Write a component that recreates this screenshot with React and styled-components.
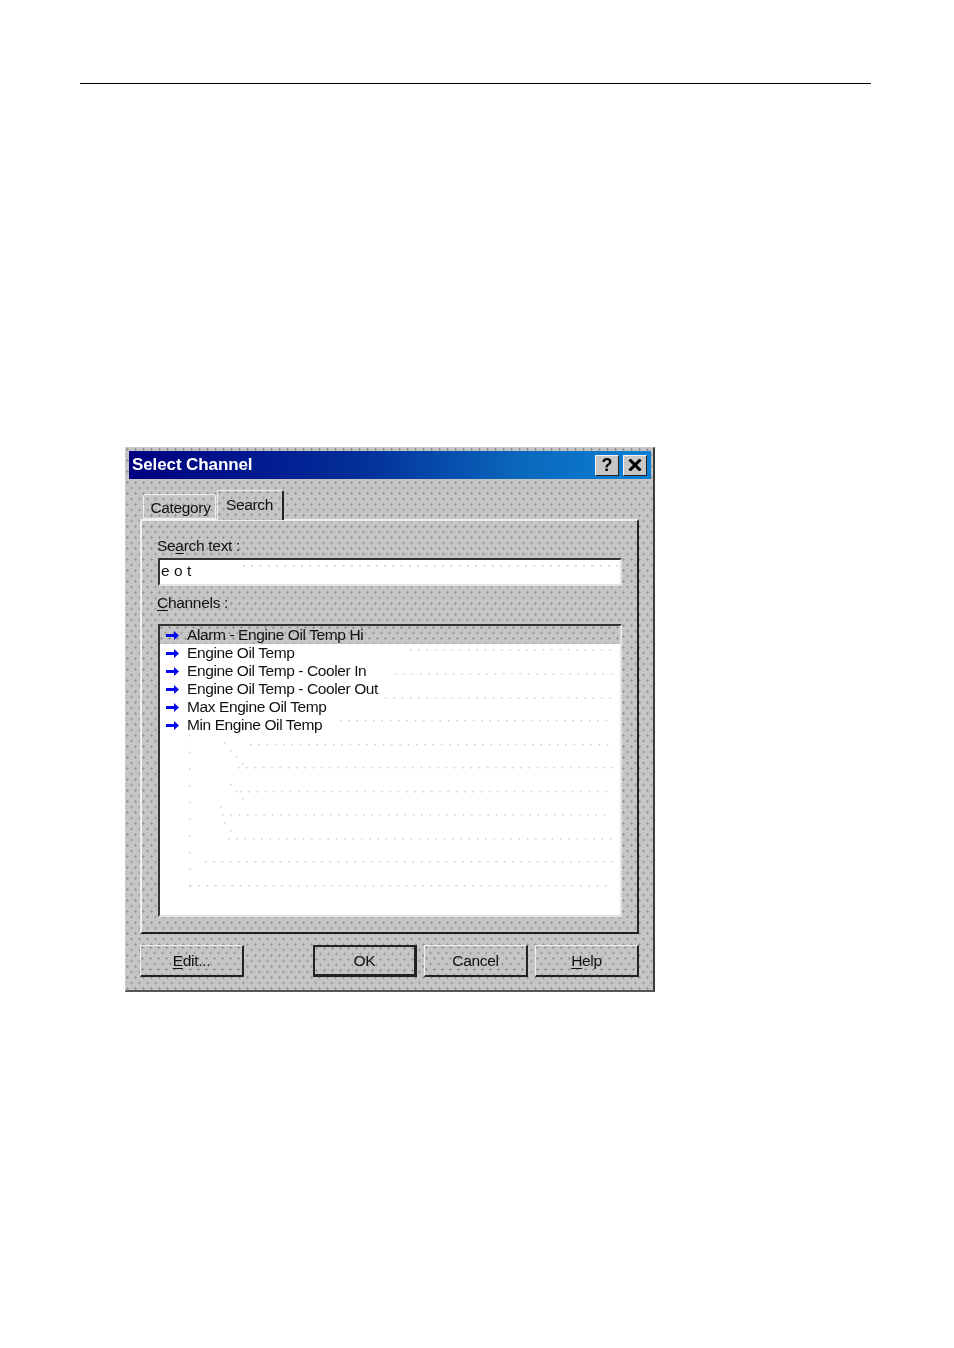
import React from "react";
import styled, { createGlobalStyle } from "styled-components";

const Global = createGlobalStyle`
  html, body { margin: 0; padding: 0; background: #fff; }
  body { font-family: "Liberation Sans", Arial, sans-serif; color: #111; }
`;

const dither = `
  radial-gradient(circle at 1.5px 1.5px, #999 1px, transparent 1.4px) 0 0 / 8px 11px,
  radial-gradient(circle at 1.5px 1.5px, #9f9f9f 1px, transparent 1.4px) 4px 5.5px / 8px 11px,
  #c5c5c5
`;

const Page = styled.div`
  width: 954px;
  height: 1348px;
  padding: 83px 0 0 80px;
  box-sizing: border-box;
  overflow: hidden;
`;

const Rule = styled.div`
  width: 791px;
  height: 1px;
  background: #000;
`;

const Dialog = styled.div`
  width: 530px;
  height: 545px;
  margin: 363px 0 0 45px;
  box-sizing: border-box;
  padding: 3px 2px 0 3px;
  background: ${dither};
  border-top: 1px solid #c8c8c8;
  border-left: 1px solid #c8c8c8;
  border-right: 2px solid #3a3a3a;
  border-bottom: 2px solid #555;
  filter: blur(0.4px);
  display: flex;
  flex-direction: column;
`;

const TitleBar = styled.div`
  height: 28px;
  flex: none;
  display: flex;
  align-items: center;
  padding: 0 4px 0 3px;
  background: linear-gradient(90deg, #000080 0%, #03309a 45%, #0a68bc 75%, #0c80d4 100%);
`;

const TitleText = styled.div`
  flex: 1;
  color: #fff;
  font-size: 17px;
  font-weight: 700;
  letter-spacing: -0.1px;
  margin-top: -1px;
`;

const CaptionButton = styled.button`
  width: 24px;
  height: 21px;
  margin-left: 4px;
  padding: 0;
  display: flex;
  align-items: center;
  justify-content: center;
  box-sizing: border-box;
  background: #c6c6c6;
  border: 1px solid;
  border-color: #f4f4f4 #222 #222 #f4f4f4;
  font: 700 18px "Liberation Sans", Arial, sans-serif;
  color: #000;
`;

const Body = styled.div`
  flex: 1;
  padding: 11px 12px 0 11px;
  display: flex;
  flex-direction: column;
`;

const TabStrip = styled.div`
  height: 29px;
  flex: none;
  padding-left: 3px;
  display: flex;
  align-items: flex-end;
  position: relative;
  z-index: 1;
`;

const Tab = styled.div`
  box-sizing: border-box;
  height: ${(p) => (p.$active ? 30 : 25)}px;
  width: ${(p) => (p.$active ? 67 : 73)}px;
  margin-left: ${(p) => (p.$active ? 1 : 0)}px;
  margin-bottom: ${(p) => (p.$active ? -1 : 0)}px;
  padding: ${(p) => (p.$active ? "5px 1px 0 0" : "4px 0 0 2px")};
  text-align: center;
  font-size: 15.5px;
  line-height: 18px;
  letter-spacing: -0.35px;
  border-top: 1px solid #f0f0f0;
  border-left: 1px solid #f0f0f0;
  border-right: ${(p) => (p.$active ? "2px solid #222" : "1px solid #f0f0f0")};
  border-bottom: ${(p) => (p.$active ? "none" : "1px solid #f0f0f0")};
  border-radius: 2px 2px 0 0;
  background: ${(p) => (p.$active ? dither : "none")};
`;

const TabPanel = styled.div`
  width: 499px;
  height: 415px;
  box-sizing: border-box;
  flex: none;
  padding: 16px 15px 0 15px;
  border-top: 2px solid #f0f0f0;
  border-left: 2px solid #f0f0f0;
  border-right: 2px solid #222;
  border-bottom: 2px solid #222;
`;

const FieldLabel = styled.div`
  font-size: 15.5px;
  line-height: 18px;
  letter-spacing: -0.3px;
  height: 19px;
`;

const Mnemonic = styled.span`
  text-decoration: underline;
  text-underline-offset: 2px;
`;

const TextField = styled.div`
  width: 464px;
  height: 28px;
  margin: 2px 0 8px 1px;
  box-sizing: border-box;
  padding: 2px 0 0 1px;
  background:
    linear-gradient(#fff, #fff) 0 0 / 78px 100% no-repeat,
    radial-gradient(circle at 1px 1px, #d8d8d8 0.8px, transparent 1.2px) 0 5px / 8.3px 40px repeat-x,
    #fff;
  border-top: 2px solid #333;
  border-left: 2px solid #333;
  border-right: 2px solid #e4e4e4;
  border-bottom: 2px solid #e4e4e4;
  font-size: 15.5px;
  line-height: 18px;
  letter-spacing: 0.05px;
`;

const ChannelList = styled.div`
  width: 464px;
  height: 293px;
  margin: 11px 0 0 1px;
  box-sizing: border-box;
  background: #fff;
  position: relative;
  border-top: 2px solid #333;
  border-left: 2px solid #333;
  border-right: 2px solid #e4e4e4;
  border-bottom: 2px solid #e4e4e4;
`;

const ScanSpeckle = styled.svg`
  position: absolute;
  left: 0;
  top: 0;
`;

const ChannelRow = styled.div`
  height: 18px;
  position: relative;
  display: flex;
  align-items: center;
  padding-left: 6px;
  gap: 8px;
  font-size: 15.5px;
  letter-spacing: -0.4px;
  white-space: nowrap;
  background: ${(p) => (p.$selected ? dither : "none")};
`;

const ChannelName = styled.span`
  line-height: 18px;
`;

const ButtonRow = styled.div`
  display: flex;
  margin-top: 11px;
`;

const PushButton = styled.button`
  width: 104px;
  height: 32px;
  padding: 0;
  margin-left: ${(p) => p.$gap || 0}px;
  box-sizing: border-box;
  background: ${dither};
  font: 15.5px/18px "Liberation Sans", Arial, sans-serif;
  letter-spacing: -0.3px;
  color: #111;
  border-style: solid;
  border-width: ${(p) => (p.$default ? "2px 3px 3px 2px" : "1px 2px 2px 1px")};
  border-color: ${(p) => (p.$default ? "#222" : "#f0f0f0 #222 #222 #f0f0f0")};
`;

const ArrowIcon = () => (
  <svg width="13" height="9" viewBox="0 0 13 9" style={{ flex: "none" }}>
    <path d="M0 3h8V0l5 4.5L8 9V6H0z" fill="#0808f0" />
  </svg>
);

const channels = [
  "Alarm - Engine Oil Temp Hi",
  "Engine Oil Temp",
  "Engine Oil Temp - Cooler In",
  "Engine Oil Temp - Cooler Out",
  "Max Engine Oil Temp",
  "Min Engine Oil Temp",
];

// faint scanner speckle in the empty list: [y, first x] in list coordinates
const speckleRows = [
  [23, 250], [47, 235], [71, 225], [94, 180], [118, 90], [141, 78],
  [165, 80], [188, 62], [212, 68], [235, 45], [259, 30],
];
const speckleDots = [];
speckleRows.forEach(([y, start]) => {
  for (let x = start; x < 452; x += 8.3) speckleDots.push([x, y]);
});
for (let y = 109; y < 270; y += 16.7) speckleDots.push([29, y]);
[[64, 116], [70, 124], [76, 130], [82, 137], [70, 158], [76, 165], [82, 172], [60, 180], [64, 196], [70, 204]].forEach(
  (d) => speckleDots.push(d)
);

export default function App() {
  return (
    <Page>
      <Global />
      <Rule />
      <Dialog>
        <TitleBar>
          <TitleText>Select Channel</TitleText>
          <CaptionButton>?</CaptionButton>
          <CaptionButton>
            <svg width="14" height="12" viewBox="0 0 14 12">
              <path d="M1.5 0.5L12.5 11.5M12.5 0.5L1.5 11.5" stroke="#000" strokeWidth="3" fill="none" />
            </svg>
          </CaptionButton>
        </TitleBar>
        <Body>
          <TabStrip>
            <Tab>Category</Tab>
            <Tab $active>Search</Tab>
          </TabStrip>
          <TabPanel>
            <FieldLabel>
              Se<Mnemonic>a</Mnemonic>rch text :
            </FieldLabel>
            <TextField>e o t</TextField>
            <FieldLabel>
              <Mnemonic>C</Mnemonic>hannels :
            </FieldLabel>
            <ChannelList>
              <ScanSpeckle width="460" height="289" viewBox="0 0 460 289">
                {speckleDots.map(([x, y], i) => (
                  <rect key={i} x={x} y={y} width="1.5" height="1.5" fill="#cfcfcf" />
                ))}
              </ScanSpeckle>
              {channels.map((c, i) => (
                <ChannelRow key={c} $selected={i === 0}>
                  <ArrowIcon />
                  <ChannelName>{c}</ChannelName>
                </ChannelRow>
              ))}
            </ChannelList>
          </TabPanel>
          <ButtonRow>
            <PushButton>
              <Mnemonic>E</Mnemonic>dit...
            </PushButton>
            <PushButton $gap={69} $default>OK</PushButton>
            <PushButton $gap={7}>Cancel</PushButton>
            <PushButton $gap={7}>
              <Mnemonic>H</Mnemonic>elp
            </PushButton>
          </ButtonRow>
        </Body>
      </Dialog>
    </Page>
  );
}
